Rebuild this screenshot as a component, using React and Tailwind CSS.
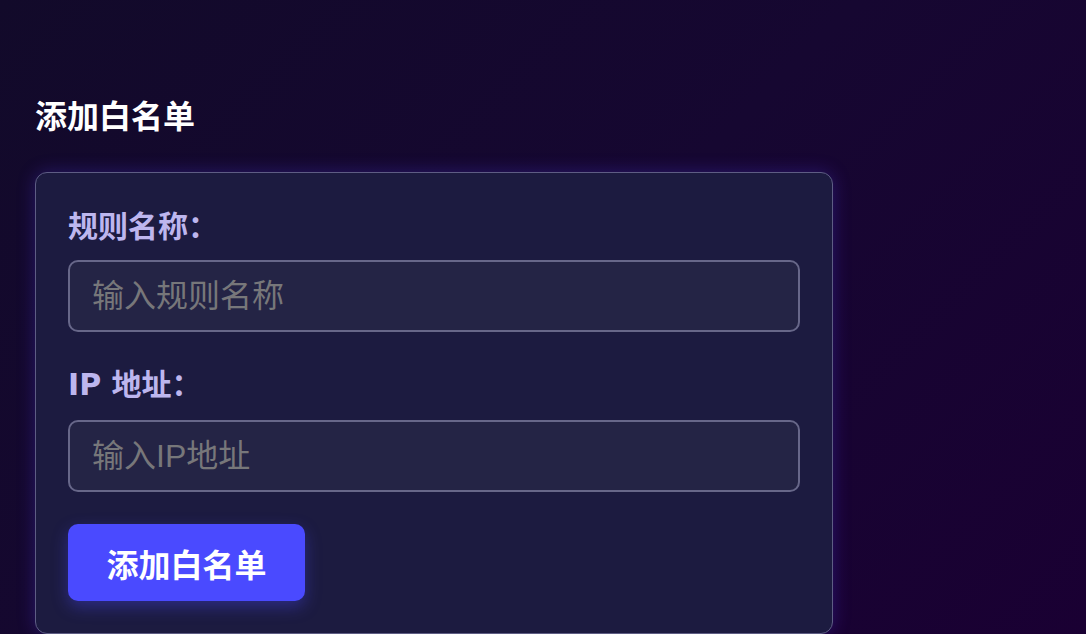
export default function App() {
  const cjk = { fontFamily: '"Noto Sans CJK SC", sans-serif' }
  const field = { fontFamily: '"Liberation Sans", "Noto Sans CJK SC", sans-serif' }
  return (
    <div className="min-h-[634px] bg-[linear-gradient(135deg,#120a2a_0%,#160731_50%,#1a0033_100%)] px-[35px] pt-[90px] pb-[1px]" style={cjk}>
      <h2 className="text-[32px] leading-[48px] font-bold text-white">添加白名单</h2>
      <div className="mt-[34px] w-[798px] rounded-[12px] border-[1.5px] border-[#5e5d84] bg-[#1c1b40] px-[32px] pt-[29px] pb-[32px] shadow-[0_0_18px_rgba(90,60,255,0.28)]">
        <label className="block text-[30px] leading-[44px] font-bold text-[#bdb6ee]">规则名称：</label>
        <input
          placeholder="输入规则名称"
          className="mt-[14px] block h-[72px] w-full rounded-[10px] border-2 border-[#676789] bg-[#242445] px-[22px] text-[32px] text-white outline-none placeholder:text-[#77777a]"
          style={field}
        />
        <label
          className="mt-[32px] block text-[30px] leading-[42px] font-bold text-[#bdb6ee]"
          style={{ fontFamily: '"DejaVu Sans", "Noto Sans CJK SC", sans-serif' }}
        >
          IP 地址：
        </label>
        <input
          placeholder="输入IP地址"
          className="mt-[14px] block h-[72px] w-full rounded-[10px] border-2 border-[#676789] bg-[#242445] px-[22px] text-[32px] text-white outline-none placeholder:text-[#77777a]"
          style={field}
        />
        <button className="mt-[32px] h-[77px] w-[237px] rounded-[10px] bg-[#4a4aff] text-[32px] font-bold text-white shadow-[0_6px_16px_rgba(74,74,255,0.35)]">
          添加白名单
        </button>
      </div>
    </div>
  )
}
